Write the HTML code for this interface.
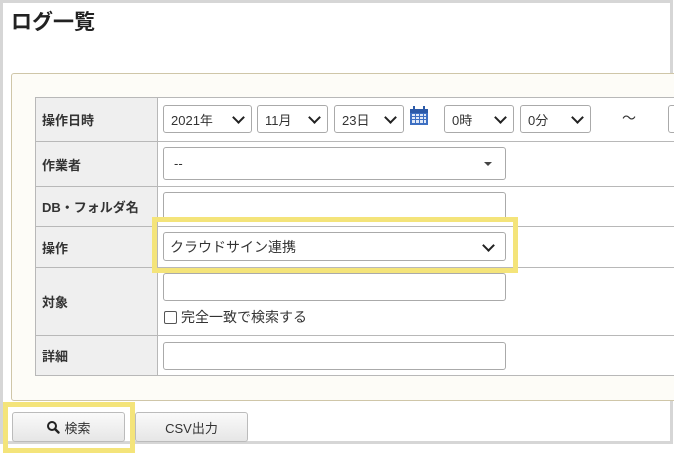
<!DOCTYPE html>
<html><head><meta charset="utf-8"><style>
*{box-sizing:border-box;margin:0;padding:0}
body{width:674px;height:457px;background:#fff;position:relative;overflow:hidden;font-family:"Liberation Sans","Noto Sans CJK JP",sans-serif;font-size:13px;color:#333}
.a{position:absolute}
.frame{left:0;top:0;width:673px;height:444px;border:3px solid #d6d6d6;border-bottom-width:3px}
.title{left:11px;top:6px;font-size:21px;font-weight:bold;color:#222}
.panel{left:11px;top:73px;width:680px;height:328px;background:#fdfcf7;border:1px solid #cfc6a8;border-radius:3px}
.lab{left:35px;width:123px;background:#efefef;border:1px solid #b8b8b8;font-weight:bold;color:#333;padding-left:6px;display:flex;align-items:center}
.val{left:157px;width:540px;background:#fff;border:1px solid #b8b8b8}
.sel{border:1px solid #aaa;border-radius:3px;background:#fff;height:28px;display:flex;align-items:center;padding-left:7px;font-size:13px;color:#333}
.chev{position:absolute;right:8px;top:7px;width:9px;height:9px;border-right:2.5px solid #222;border-bottom:2.5px solid #222;transform:rotate(45deg)}
.inp{border:1px solid #aaa;border-radius:3px;background:#fff}
.y{border:5px solid #f4e47a}
.btn{border:1px solid #bbb;border-radius:3px;background:linear-gradient(#fafafa,#e6e6e6);display:flex;align-items:center;justify-content:center;font-size:13px;color:#333}
</style></head><body>
<div class="a frame"></div>
<div class="a title">ログ一覧</div>
<div class="a panel"></div>

<div class="a lab" style="top:97px;height:45px">操作日時</div>
<div class="a val" style="top:97px;height:45px"></div>
<div class="a lab" style="top:141px;height:46px">作業者</div>
<div class="a val" style="top:141px;height:46px"></div>
<div class="a lab" style="top:186px;height:41px">DB・フォルダ名</div>
<div class="a val" style="top:186px;height:41px"></div>
<div class="a lab" style="top:226px;height:42px">操作</div>
<div class="a val" style="top:226px;height:42px"></div>
<div class="a lab" style="top:267px;height:69px">対象</div>
<div class="a val" style="top:267px;height:69px"></div>
<div class="a lab" style="top:335px;height:41px">詳細</div>
<div class="a val" style="top:335px;height:41px"></div>

<div class="a sel" style="left:163px;top:105px;width:89px">2021年<span class="chev"></span></div>
<div class="a sel" style="left:257px;top:105px;width:71px">11月<span class="chev"></span></div>
<div class="a sel" style="left:334px;top:105px;width:70px">23日<span class="chev"></span></div>
<svg class="a" style="left:409px;top:106px" width="20" height="20" viewBox="0 0 20 20"><rect x="1" y="3" width="18" height="16" fill="#3d6fc2"/><rect x="1" y="3" width="18" height="4" fill="#2c5aa8"/><g fill="#dfe8f7"><rect x="3" y="8" width="3" height="2"/><rect x="7" y="8" width="3" height="2"/><rect x="11" y="8" width="3" height="2"/><rect x="15" y="8" width="2" height="2"/><rect x="3" y="11" width="3" height="2"/><rect x="7" y="11" width="3" height="2"/><rect x="11" y="11" width="3" height="2"/><rect x="15" y="11" width="2" height="2"/><rect x="3" y="14" width="3" height="3"/><rect x="7" y="14" width="3" height="3"/><rect x="11" y="14" width="3" height="3"/><rect x="15" y="14" width="2" height="3"/></g><rect x="4" y="0" width="2" height="5" fill="#2c5aa8"/><rect x="14" y="0" width="2" height="5" fill="#2c5aa8"/></svg>
<div class="a sel" style="left:444px;top:105px;width:70px">0時<span class="chev"></span></div>
<div class="a sel" style="left:520px;top:105px;width:71px">0分<span class="chev"></span></div>
<div class="a" style="left:622px;top:108px;font-size:14px">～</div>
<div class="a inp" style="left:668px;top:105px;width:20px;height:28px"></div>

<div class="a inp" style="left:163px;top:147px;width:343px;height:33px;padding:8px 10px;color:#333">--</div>
<div class="a" style="left:484px;top:162px;border-left:4px solid transparent;border-right:4px solid transparent;border-top:4px solid #444"></div>
<div class="a inp" style="left:163px;top:192px;width:343px;height:30px"></div>
<div class="a sel" style="left:163px;top:232px;width:343px;height:29px;padding-left:6px;font-size:14px">クラウドサイン連携<span class="chev" style="top:8px;right:12px"></span></div>
<div class="a inp" style="left:163px;top:273px;width:343px;height:28px"></div>
<div class="a" style="left:164px;top:311px;width:13px;height:13px;border:1px solid #555;border-radius:2px"></div>
<div class="a" style="left:181px;top:307px;font-size:14px">完全一致で検索する</div>
<div class="a inp" style="left:163px;top:342px;width:343px;height:28px"></div>

<div class="a y" style="left:152px;top:217px;width:366px;height:56px"></div>

<div class="a btn" style="left:12px;top:412px;width:113px;height:30px"><svg width="14" height="14" viewBox="0 0 14 14" style="margin-right:4px"><circle cx="6" cy="6" r="4" fill="none" stroke="#222" stroke-width="2"/><line x1="9" y1="9" x2="12.5" y2="12.5" stroke="#222" stroke-width="2.4" stroke-linecap="round"/></svg>検索</div>
<div class="a btn" style="left:135px;top:412px;width:113px;height:30px">CSV出力</div>
<div class="a y" style="left:3px;top:402px;width:132px;height:51px"></div>
</body></html>
